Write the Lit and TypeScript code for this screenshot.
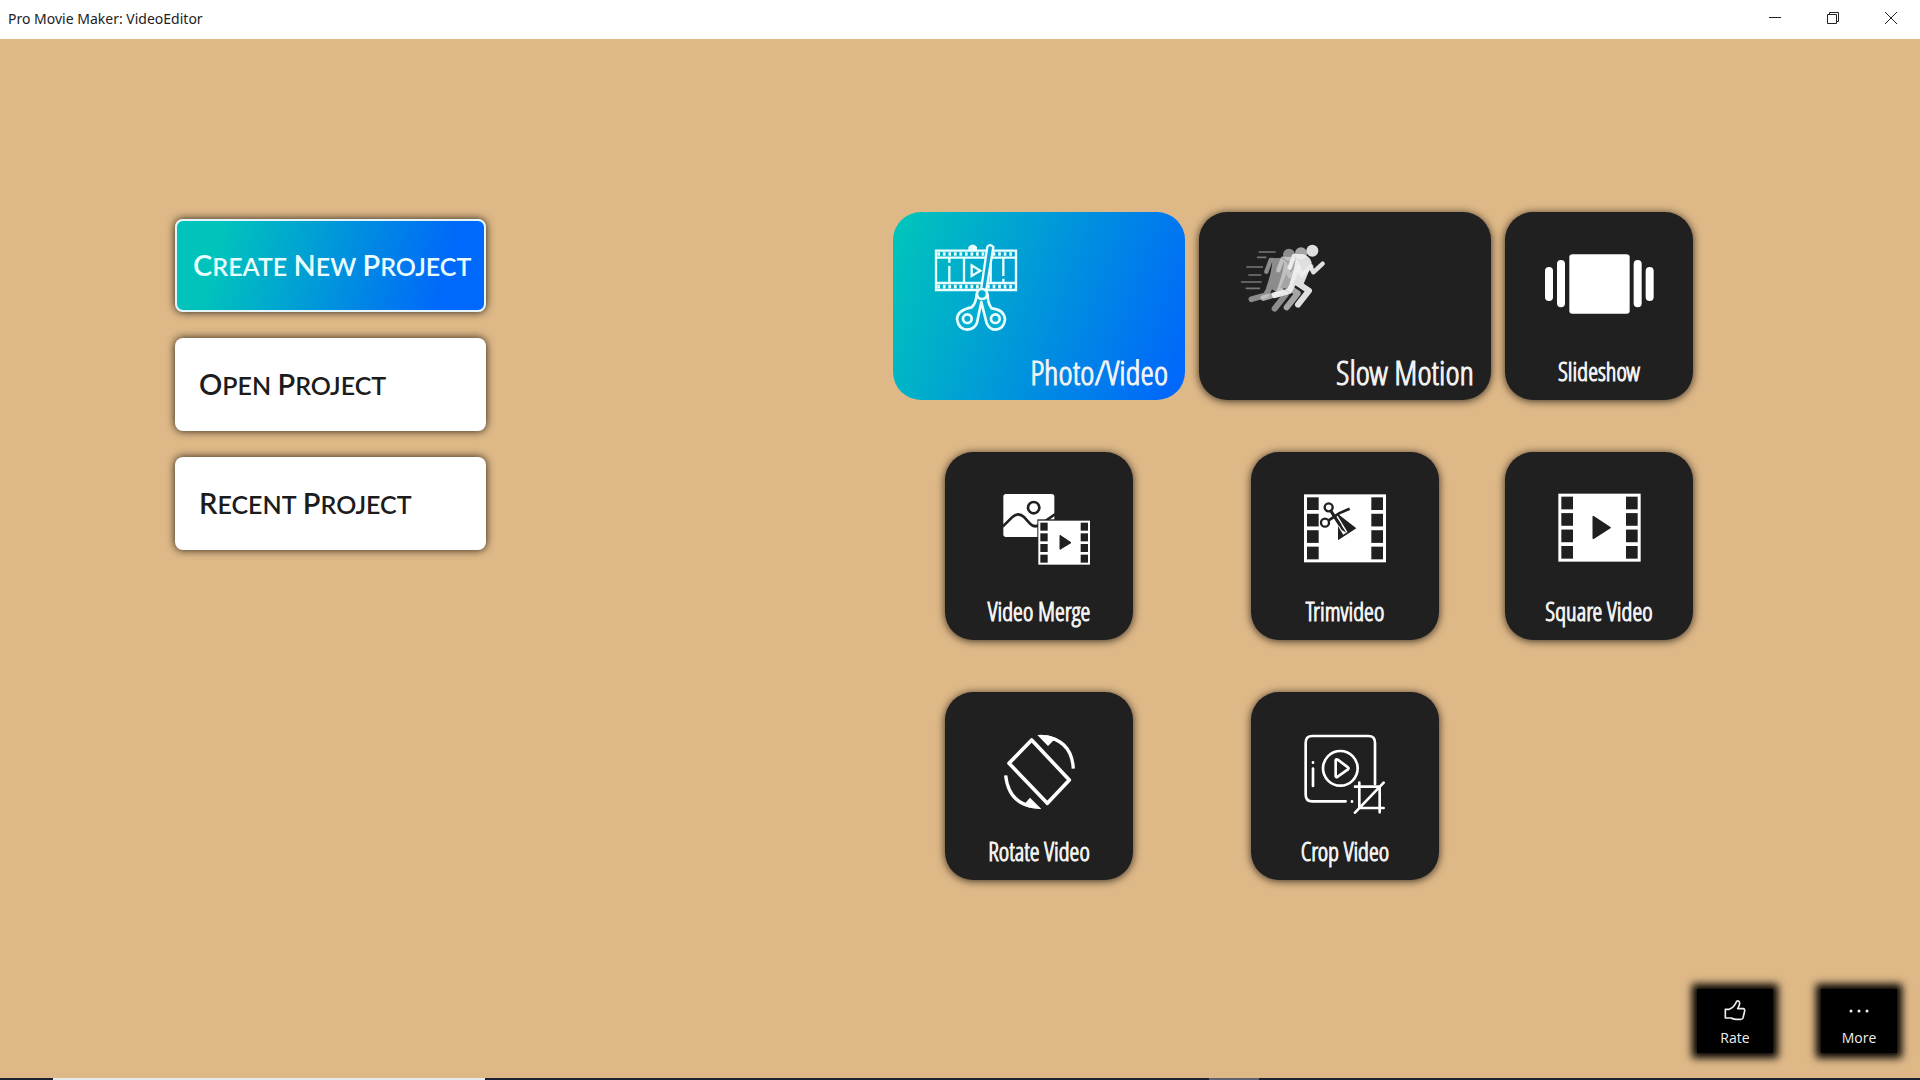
import { LitElement, html, svg, css, nothing } from "lit";
import { customElement, property } from "lit/decorators.js";

const film = (x: number, y: number, w: number, h: number, hole: number, holeH: number, inset: number) => {
  const step = (h - 2 * inset + (h - 2 * inset - 4 * holeH) / 3) / 4;
  return svg`<rect x=${x} y=${y} width=${w} height=${h} fill="#fff"/>
    ${[0, 1, 2, 3].map(
      (i) => svg`<rect x=${x + inset} y=${y + inset + i * step} width=${hole} height=${holeH} fill="#202020"/>
      <rect x=${x + w - inset - hole} y=${y + inset + i * step} width=${hole} height=${holeH} fill="#202020"/>`
    )}`;
};

const runner = (dx: number, dy: number, color: string, opacity: number) => svg`
  <g transform="translate(${dx} ${dy})" opacity=${opacity} fill="none" stroke=${color} stroke-linecap="round" stroke-linejoin="round">
    <circle cx="364" cy="152" r="18" fill=${color} stroke="none"/>
    <path d="M338 170L309 168L296 203" stroke-width="13"/>
    <path d="M330 166Q352 168 358 188Q350 215 334 250L300 250Q316 205 318 172Z" fill=${color} stroke-width="8"/>
    <path d="M350 184L367 217L395 191" stroke-width="13"/>
    <path d="M318 248L354 272L321 314" stroke-width="18"/>
    <path d="M312 240L294 274L251 286" stroke-width="17"/>
  </g>`;

const holes = Array.from({ length: 14 }, (_, i) => 172 + i * 16.6);

const icons: Record<string, unknown> = {
  photo: html`<svg viewBox="162 129 252 267" width="84" height="89" aria-hidden="true">
    <g fill="none" stroke="#eaffff" stroke-width="7">
      <path d="M168 152H408V270H168ZM168 173H408M168 249H408M252 173V249M208 198V249M208 173V188M332 249V173M370 173V228M370 236V249"/>
      <path d="M275 196V228L301 212Z"/>
    </g>
    ${holes.map((x) => svg`<path d="M${x} 162H${x + 8}M${x} 260H${x + 8}" stroke="#eaffff" stroke-width="11"/>`)}
    <path d="M268 152V142Q278 132 288 142V152" fill="#eaffff" stroke="#eaffff" stroke-width="6"/>
    <path d="M322 140Q331 130 340 141L319 270H303Z" fill="#0aa6d2" stroke="#eaffff" stroke-width="7"/>
    <g fill="#04aed0" stroke="#eaffff" stroke-width="8" stroke-linejoin="round">
      <path d="M290 284Q288 310 275 322Q232 330 231 358Q236 389 262 389Q284 387 291 368L304 306L320 370Q329 389 347 389Q372 386 375 358Q372 328 335 325Q323 310 323 284Z"/>
      <circle cx="306" cy="282" r="15"/>
      <circle cx="262" cy="356" r="13"/>
      <circle cx="346" cy="356" r="13"/>
    </g>
  </svg>`,
  slow: html`<svg viewBox="147 129 258 210" width="86" height="70" aria-hidden="true">
    <path d="M203 156H254M198 172H226M166 201H216M172 225H211M150 246H212M164 265H207" stroke="#777" stroke-width="5"/>
    ${runner(-70, 12, "#8c8c8c", 1)} ${runner(-34, 8, "#d2d2d2", 0.75)} ${runner(0, 0, "#f4f4f4", 0.9)}
  </svg>`,
  slideshow: html`<svg viewBox="162 159 333 186" width="111" height="62" fill="#fff" aria-hidden="true">
    <rect x="238" y="163" width="181" height="178" rx="9"/>
    <rect x="201" y="180" width="24" height="142" rx="12"/>
    <rect x="165" y="201" width="24" height="102" rx="12"/>
    <rect x="431" y="180" width="24" height="142" rx="12"/>
    <rect x="467" y="201" width="24" height="102" rx="12"/>
  </svg>`,
  merge: html`<svg viewBox="174 159 309 222" width="103" height="74" aria-hidden="true">
    <rect x="220" y="162" width="153" height="129" rx="8" fill="#fff"/>
    <g fill="none" stroke="#202020" stroke-width="8">
      <circle cx="311" cy="203" r="17"/>
      <path d="M218 260L246 232Q264 214 283 232L300 251Q314 267 336 250L376 222"/>
    </g>
    <rect x="322" y="238" width="161" height="139" fill="#202020"/>
    ${film(325, 242, 155, 132, 22, 24, 6)}
    <path d="M390 286V328L423 308Z" fill="#202020" stroke="#202020" stroke-width="3" stroke-linejoin="round"/>
  </svg>`,
  trim: html`<svg viewBox="192 159 252 213" width="84" height="71" aria-hidden="true">
    ${film(195, 163, 246, 204, 35, 38, 9)}
    <path d="M297 222L352 265L297 301Z" fill="#202020"/>
    <path d="M284 222L319 280" stroke="#fff" stroke-width="15"/>
    <g fill="none" stroke="#202020">
      <circle cx="269" cy="202" r="12" stroke-width="7"/>
      <circle cx="258" cy="248" r="12" stroke-width="7"/>
      <path d="M275 212L304 257" stroke-width="9"/>
      <path d="M268 242L300 220L332 206" stroke-width="8"/>
    </g>
    <path d="M296 238L322 278L308 270L290 240Z" fill="#202020"/>
  </svg>`,
  square: html`<svg viewBox="204 159 255 213" width="85" height="71" aria-hidden="true">
    ${film(208, 161, 247, 204, 35, 38, 9)}
    <path d="M313 230V295L363 263Z" fill="#202020" stroke="#202020" stroke-width="5" stroke-linejoin="round"/>
  </svg>`,
  rotate: html`<svg viewBox="216 159 225 231" width="75" height="77" aria-hidden="true">
    <path d="M305 180L418 300L352 370L237 250Z" fill="none" stroke="#fff" stroke-width="11" stroke-linejoin="round"/>
    <path d="M345 170Q425 182 430 266M227 286Q236 370 312 380" fill="none" stroke="#fff" stroke-width="10"/>
    <path d="M322 165Q350 162 378 174L354 198ZM334 387Q306 388 280 376L300 353Z" fill="#fff"/>
  </svg>`,
  crop: html`<svg viewBox="192 159 252 246" width="84" height="82" aria-hidden="true">
    <g fill="none" stroke="#fff" stroke-width="8" stroke-linecap="round" stroke-linejoin="round">
      <path d="M408 312V188Q408 168 388 168H220Q200 168 200 188V344Q200 364 220 364H320"/>
      <circle cx="304" cy="265" r="52"/>
      <path d="M290 241V289Q291 294 296 290L327 268Q330 265 327 262L296 239Q291 236 290 241Z"/>
      <path d="M222 266V318M222 247V248M339 364V365M348 320H422V397M361 308V384H434M348 398L434 308"/>
    </g>
  </svg>`,
};

@customElement("tool-card")
class ToolCard extends LitElement {
  @property() icon = "";
  @property() label = "";
  @property({ type: Boolean, reflect: true }) wide = false;
  @property({ type: Boolean, reflect: true }) active = false;

  static styles = css`
    :host {
      display: block;
      width: 188px;
    }
    :host([wide]) {
      width: 100%;
    }
    .card {
      box-sizing: border-box;
      width: 100%;
      height: 188px;
      display: flex;
      flex-direction: column;
      align-items: center;
      justify-content: space-between;
      padding: 41px 8px 14px;
      border: 0;
      border-radius: 28px;
      background: #202020;
      box-shadow: 0 1px 9px rgba(0, 0, 0, 0.75);
      color: #f4f4f4;
      font: 25px/30px "Open Sans Condensed Light", "Open Sans Condensed", "Liberation Serif", serif;
      -webkit-text-stroke: 1px currentColor;
      cursor: pointer;
    }
    :host([wide]) .card {
      padding: 31px 17px 10px 41px;
      align-items: flex-start;
      font-size: 34px;
      line-height: 36px;
    }
    :host([wide]) .label {
      align-self: flex-end;
    }
    :host([active]) .card {
      background: linear-gradient(110deg, #00c4bc 3%, #0068fa 95%);
      box-shadow: none;
    }
    svg {
      display: block;
    }
  `;

  render() {
    return html`<button class="card" type="button">
      ${icons[this.icon] ?? nothing}<span class="label">${this.label}</span>
    </button>`;
  }
}

const words = (text: string) => text.split(" ").map((word) => html`<span class="word">${word}</span> `);

@customElement("app-root")
class AppRoot extends LitElement {
  static styles = css`
    :host {
      display: flex;
      flex-direction: column;
      min-height: 100vh;
      background: #deb887;
      font-family: "Open Sans", "Noto Sans", sans-serif;
    }
    button {
      font: inherit;
      border: 0;
      cursor: pointer;
    }
    .titlebar {
      display: flex;
      justify-content: space-between;
      height: 39px;
      background: #fff;
      color: #222;
    }
    .title {
      margin: 0;
      padding-left: 8px;
      font: 14px/38px "Noto Sans", "Open Sans", sans-serif;
    }
    .controls {
      display: flex;
    }
    .control {
      width: 58px;
      padding: 0 0 3px;
      display: grid;
      place-items: center;
      background: none;
    }
    .main {
      flex: 1;
      display: flex;
      justify-content: space-between;
      align-items: flex-start;
      padding: 173px 227px 0 175px;
    }
    .projects {
      display: flex;
      flex-direction: column;
      gap: 26px;
      padding-top: 7px;
    }
    .project {
      box-sizing: border-box;
      width: 311px;
      height: 93px;
      padding: 0 24px;
      border-radius: 8px;
      background: #fff;
      box-shadow: 0 0 8px rgba(0, 0, 0, 0.85);
      color: #1c1c1c;
      font: 600 25px/36px Lato, "Open Sans", sans-serif;
      text-transform: uppercase;
      text-align: left;
      white-space: nowrap;
    }
    .word {
      display: inline-block;
    }
    .word::first-letter {
      font-size: 29px;
    }
    .project.primary {
      padding: 0 16px;
      border: 2px solid #e4f6fa;
      background: linear-gradient(105deg, #00c4bc 14%, #0068fa 86%);
      color: #eaffff;
    }
    .tools {
      display: grid;
      grid-template-columns: 292px 292px 188px;
      gap: 52px 14px;
      justify-items: center;
    }
    .dock {
      display: flex;
      justify-content: flex-end;
      gap: 48px;
      padding: 0 23px 25px;
    }
    .dock-button {
      width: 76px;
      height: 64px;
      padding: 10px 0 0;
      display: flex;
      flex-direction: column;
      align-items: center;
      gap: 7px;
      background: #000;
      box-shadow: 0 0 8px 5px #000;
      color: #eee;
      font-size: 14px;
      line-height: 20px;
    }
    .taskbar {
      display: flex;
      height: 2px;
      background: #1b2333;
    }
    .segment {
      margin-left: 53px;
      width: 432px;
      background: #e8eaee;
    }
    .segment.small {
      margin-left: 724px;
      width: 50px;
      background: #5d6470;
    }
  `;

  render() {
    return html`
      <header class="titlebar">
        <h1 class="title">Pro Movie Maker: VideoEditor</h1>
        <div class="controls">
          <button class="control" type="button" aria-label="Minimize">
            <svg width="14" height="14" viewBox="0 0 14 14"><path d="M1 6.5H13" stroke="#222"/></svg>
          </button>
          <button class="control" type="button" aria-label="Restore">
            <svg width="14" height="14" viewBox="0 0 14 14" fill="none" stroke="#222"><path d="M1.500 3.500H10.500V12.500H1.500ZM3.500 3.500V1.500H12.500V10.500H10.500"/></svg>
          </button>
          <button class="control" type="button" aria-label="Close">
            <svg width="14" height="14" viewBox="0 0 14 14"><path d="M1 1L13 13M13 1L1 13" stroke="#222"/></svg>
          </button>
        </div>
      </header>
      <main class="main">
        <nav class="projects">
          <button class="project primary" type="button">${words("Create New Project")}</button>
          <button class="project" type="button">${words("Open Project")}</button>
          <button class="project" type="button">${words("Recent Project")}</button>
        </nav>
        <section class="tools">
          <tool-card wide active icon="photo" label="Photo/Video"></tool-card>
          <tool-card wide icon="slow" label="Slow Motion"></tool-card>
          <tool-card icon="slideshow" label="Slideshow"></tool-card>
          <tool-card icon="merge" label="Video Merge"></tool-card>
          <tool-card icon="trim" label="Trimvideo"></tool-card>
          <tool-card icon="square" label="Square Video"></tool-card>
          <tool-card icon="rotate" label="Rotate Video"></tool-card>
          <tool-card icon="crop" label="Crop Video"></tool-card>
        </section>
      </main>
      <footer class="dock">
        <button class="dock-button" type="button">
          <svg width="22" height="22" viewBox="0 0 66 66" fill="none" stroke="#eee" stroke-width="5" stroke-linejoin="round" aria-hidden="true">
            <path d="M4 31H16Q32 24 38 7Q46 3 47 13Q46 21 41 29H58Q63 30 62 36L57 57Q55 61 50 61H36Q26 60 22 57H4Z"/>
          </svg>
          <span>Rate</span>
        </button>
        <button class="dock-button" type="button">
          <svg width="22" height="22" viewBox="0 0 22 22" fill="#eee" aria-hidden="true">
            <circle cx="3" cy="12" r="1.500"/><circle cx="11" cy="12" r="1.500"/><circle cx="19" cy="12" r="1.500"/>
          </svg>
          <span>More</span>
        </button>
      </footer>
      <div class="taskbar"><span class="segment"></span><span class="segment small"></span></div>
    `;
  }
}
